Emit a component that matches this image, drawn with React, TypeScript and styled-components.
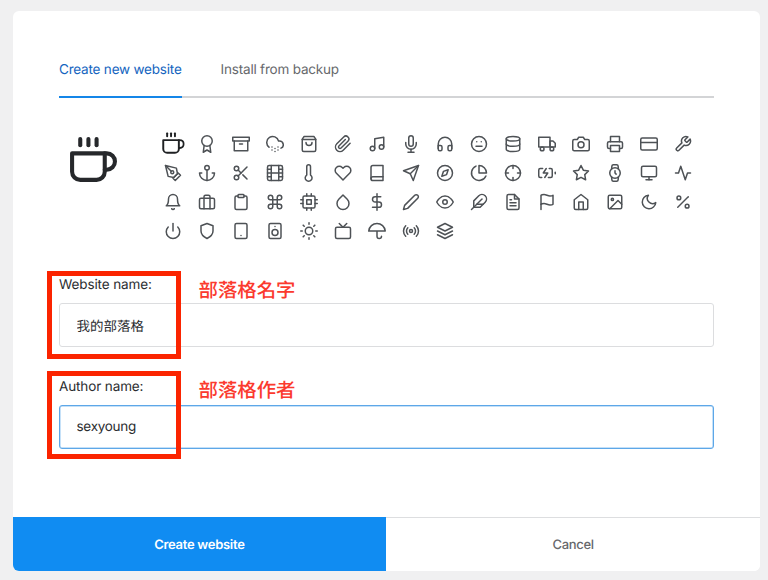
import React from 'react';
import styled, { createGlobalStyle, css } from 'styled-components';
import {
  FiCoffee, FiAward, FiArchive, FiCloudSnow, FiShoppingBag, FiPaperclip, FiMusic, FiMic,
  FiHeadphones, FiMeh, FiDatabase, FiTruck, FiCamera, FiPrinter, FiCreditCard, FiTool,
  FiPenTool, FiAnchor, FiScissors, FiFilm, FiThermometer, FiHeart, FiBook, FiSend,
  FiCompass, FiPieChart, FiCrosshair, FiBatteryCharging, FiStar, FiWatch, FiMonitor, FiActivity,
  FiBell, FiBriefcase, FiClipboard, FiCommand, FiCpu, FiDroplet, FiDollarSign, FiEdit2,
  FiEye, FiFeather, FiFileText, FiFlag, FiHome, FiImage, FiMoon, FiPercent,
  FiPower, FiShield, FiTablet, FiSpeaker, FiSun, FiTv, FiUmbrella, FiRadio, FiLayers,
} from 'react-icons/fi';

const icons = [
  FiCoffee, FiAward, FiArchive, FiCloudSnow, FiShoppingBag, FiPaperclip, FiMusic, FiMic,
  FiHeadphones, FiMeh, FiDatabase, FiTruck, FiCamera, FiPrinter, FiCreditCard, FiTool,
  FiPenTool, FiAnchor, FiScissors, FiFilm, FiThermometer, FiHeart, FiBook, FiSend,
  FiCompass, FiPieChart, FiCrosshair, FiBatteryCharging, FiStar, FiWatch, FiMonitor, FiActivity,
  FiBell, FiBriefcase, FiClipboard, FiCommand, FiCpu, FiDroplet, FiDollarSign, FiEdit2,
  FiEye, FiFeather, FiFileText, FiFlag, FiHome, FiImage, FiMoon, FiPercent,
  FiPower, FiShield, FiTablet, FiSpeaker, FiSun, FiTv, FiUmbrella, FiRadio, FiLayers,
];

const GlobalStyle = createGlobalStyle`
  * { box-sizing: border-box; }
  body {
    margin: 0;
    background: #f0f0f1;
    color: #2b2d30;
    font-family: Inter, "Noto Sans CJK TC", sans-serif;
    font-size: 13.5px;
    letter-spacing: -0.12px;
    text-rendering: geometricPrecision;
  }
`;

const Page = styled.div`
  height: 580px;
  padding: 10.5px 8px 9px 12.5px;
  overflow: hidden;
`;

const Card = styled.main`
  display: flex;
  flex-direction: column;
  height: 560.5px;
  background: #fff;
  border-radius: 6px;
  overflow: hidden;
`;

const Body = styled.div`
  flex: 1;
  padding: 39.5px 46px 0 46.5px;
`;

const Tabs = styled.nav`
  display: flex;
  gap: 39px;
  height: 48px;
  box-shadow: inset 0 -2px #d3d4d6;
`;

const Tab = styled.button<{ $active?: boolean }>`
  height: 48px;
  padding: 0 0 7px;
  border: 0;
  background: none;
  font: inherit;
  line-height: 41px;
  letter-spacing: -0.2px;
  white-space: nowrap;
  text-rendering: inherit;
  color: ${p => (p.$active ? '#1565c0' : '#66686c')};
  ${p => p.$active && css`box-shadow: inset 0 -2px #1486e8;`}
`;

const IconPicker = styled.section`
  display: flex;
  margin-top: 30.5px;
  height: 142.5px;
`;

const Preview = styled.div`
  width: 97px;
  padding: 8.5px 0 0 9px;
  color: #26282b;
`;

const IconGrid = styled.div`
  display: grid;
  grid-template-columns: repeat(16, 34px);
  grid-auto-rows: 29.1px;
  align-content: start;
  padding-top: 0.6px;
`;

const IconButton = styled.button<{ $selected?: boolean }>`
  display: flex;
  align-items: center;
  justify-content: center;
  padding: 0;
  border: 0;
  background: none;
  color: ${p => (p.$selected ? '#1f2123' : '#4e5256')};
  svg {
    width: 18px;
    height: 18px;
    flex: none;
    ${p => p.$selected && css`transform: scale(1.3);`}
  }
`;

/* A bag with a folded top edge and a handle tucked close below it. */
const BagIcon = () => (
  <svg viewBox="0 0 24 24" fill="none" stroke="currentColor" strokeWidth="2" strokeLinecap="round" strokeLinejoin="round">
    <path d="M5.5 2 3 5.5V20a2 2 0 0 0 2 2h14a2 2 0 0 0 2-2V5.5L18.500 2z" />
    <path d="M3 6h18M16 10a4 4 0 0 1-8 0" />
  </svg>
);

const Field = styled.div`
  position: relative;
  height: 102px;
`;

const Label = styled.label`
  display: block;
  height: 32px;
  padding-top: 4px;
  line-height: 20px;
`;

const Input = styled.input`
  display: block;
  width: 100%;
  height: 44px;
  padding: 0 16.5px;
  border: 1px solid #dcdddf;
  border-radius: 3px;
  background: #fff;
  color: inherit;
  font: inherit;
  letter-spacing: 0;
  text-rendering: inherit;
  outline: none;
  &[data-focused='true'] {
    letter-spacing: -0.28px;
    border-color: #5da7e8;
    box-shadow: inset 0 0 0 0.5px #8cc2f0;
  }
`;

const Highlight = styled.div<{ $top: number }>`
  position: absolute;
  left: -12px;
  top: ${p => p.$top}px;
  width: 134px;
  height: 88px;
  border: 5px solid #fb2400;
`;

const Note = styled.span<{ $top: number }>`
  position: absolute;
  left: 139.5px;
  top: ${p => p.$top}px;
  color: #fb3a2e;
  font: 500 19.4px/28px "Noto Sans CJK TC", sans-serif;
  letter-spacing: 0;
  white-space: nowrap;
`;

const Footer = styled.footer`
  display: grid;
  grid-template-columns: 1fr 1fr;
  height: 54px;
`;

const Action = styled.button<{ $primary?: boolean }>`
  padding: ${p => (p.$primary ? '0' : '1px 0 0')};
  border: 0;
  border-top: 1px solid ${p => (p.$primary ? '#108cf2' : '#dddee0')};
  background: ${p => (p.$primary ? '#108cf2' : '#fff')};
  color: ${p => (p.$primary ? '#fff' : '#66686c')};
  font: inherit;
  font-size: 13px;
  font-weight: ${p => (p.$primary ? 600 : 500)};
  letter-spacing: -0.29px;
  text-rendering: inherit;
`;

export default function App() {
  return (
    <>
      <GlobalStyle />
      <Page>
        <Card>
          <Body>
            <Tabs>
              <Tab $active>Create new website</Tab>
              <Tab>Install from backup</Tab>
            </Tabs>
            <IconPicker>
              <Preview><FiCoffee size={49} /></Preview>
              <IconGrid>
                {icons.map((Icon, i) => (
                  <IconButton key={i} $selected={i === 0}>
                    {Icon === FiShoppingBag ? <BagIcon /> : <Icon />}
                  </IconButton>
                ))}
              </IconGrid>
            </IconPicker>
            <Field>
              <Label htmlFor="website">Website name:</Label>
              <Input id="website" defaultValue="我的部落格" />
              <Highlight $top={-0.5} />
              <Note $top={4}>部落格名字</Note>
            </Field>
            <Field>
              <Label htmlFor="author">Author name:</Label>
              <Input id="author" defaultValue="sexyoung" data-focused="true" />
              <Highlight $top={-2} />
              <Note $top={2}>部落格作者</Note>
            </Field>
          </Body>
          <Footer>
            <Action $primary>Create website</Action>
            <Action>Cancel</Action>
          </Footer>
        </Card>
      </Page>
    </>
  );
}
